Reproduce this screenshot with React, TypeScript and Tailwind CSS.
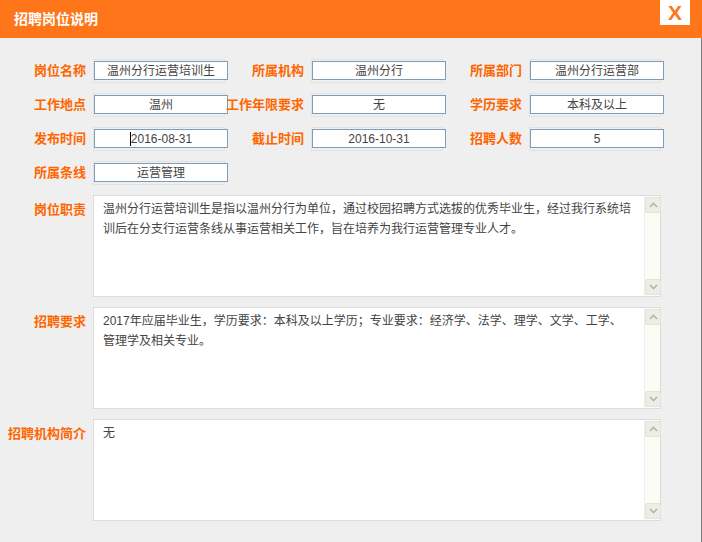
const font = { fontFamily: '"Liberation Sans", "Noto Sans CJK SC", sans-serif' };

type Field = { label: string; value: string; caret?: boolean };

const rows: Field[][] = [
  [
    { label: '岗位名称', value: '温州分行运营培训生' },
    { label: '所属机构', value: '温州分行' },
    { label: '所属部门', value: '温州分行运营部' },
  ],
  [
    { label: '工作地点', value: '温州' },
    { label: '工作年限要求', value: '无' },
    { label: '学历要求', value: '本科及以上' },
  ],
  [
    { label: '发布时间', value: '2016-08-31', caret: true },
    { label: '截止时间', value: '2016-10-31' },
    { label: '招聘人数', value: '5' },
  ],
  [{ label: '所属条线', value: '运营管理' }],
];

const areas = [
  {
    label: '岗位职责',
    lines: [
      '温州分行运营培训生是指以温州分行为单位，通过校园招聘方式选拔的优秀毕业生，经过我行系统培',
      '训后在分支行运营条线从事运营相关工作，旨在培养为我行运营管理专业人才。',
    ],
  },
  {
    label: '招聘要求',
    lines: [
      '2017年应届毕业生，学历要求：本科及以上学历；专业要求：经济学、法学、理学、文学、工学、',
      '管理学及相关专业。',
    ],
  },
  { label: '招聘机构简介', lines: ['无'] },
];

function Label({ text }: { text: string }) {
  return (
    <div className="w-[76px] mr-[7px] flex justify-end whitespace-nowrap text-[13px] font-bold text-[#ff6600]">
      {text}
    </div>
  );
}

function Input({ value, caret }: { value: string; caret?: boolean }) {
  return (
    <div className="w-[132px] h-[24px] border border-[#e2e2e2]">
      <div className="mt-px w-[134px] h-[19px] border border-[#7f9db9] bg-white flex items-center justify-center text-[12px] text-[#444]">
        {caret && <span className="inline-block w-px h-[14px] bg-black" />}
        {value}
      </div>
    </div>
  );
}

function ScrollButton({ up }: { up?: boolean }) {
  return (
    <div className="w-[16px] h-[16px] bg-[#eeede5] border border-[#e4e3da] rounded-[2px] flex items-center justify-center">
      <svg width="9" height="6" viewBox="0 0 9 6">
        <path
          d={up ? 'M1 5 L4.5 1.5 L8 5' : 'M1 1 L4.5 4.5 L8 1'}
          fill="none"
          stroke="#b5b4ab"
          strokeWidth="1.6"
        />
      </svg>
    </div>
  );
}

function Area({ label, lines }: { label: string; lines: string[] }) {
  return (
    <div className="flex items-start">
      <div className="pt-[5px]">
        <Label text={label} />
      </div>
      <div className="w-[568px] h-[102px] border border-[#dcdcdc] bg-white flex">
        <div className="flex-1 pl-[9px] pt-[3px] text-[12px] leading-[20px] text-[#444] whitespace-nowrap">
          {lines.map((l) => (
            <div key={l}>{l}</div>
          ))}
        </div>
        <div className="w-[16px] bg-[#fcfcf6] flex flex-col justify-between py-px border-l border-[#eeeeea]">
          <ScrollButton up />
          <ScrollButton />
        </div>
      </div>
    </div>
  );
}

export default function App() {
  return (
    <div className="w-[702px] h-[542px] overflow-hidden flex flex-col bg-[#efefef]" style={font}>
      <div className="h-[38px] shrink-0 bg-[#ff7519] flex items-start">
        <div className="pl-[14px] pt-[9px] text-[14px] font-bold text-white">招聘岗位说明</div>
        <div className="ml-auto mr-[12px] w-[30px] h-[25px] bg-white flex items-center justify-center text-[21px] font-bold leading-none text-[#ff7519]">
          X
        </div>
      </div>
      <div className="flex-1 border-r border-[#808080] pl-[10px] pt-[21px]">
        <div className="flex flex-col gap-[10px]">
          {rows.map((row, i) => (
            <div key={i} className="flex">
              {row.map((f) => (
                <div key={f.label} className="w-[218px] flex items-center">
                  <Label text={f.label} />
                  <Input value={f.value} caret={f.caret} />
                </div>
              ))}
            </div>
          ))}
        </div>
        <div className="mt-[10px] flex flex-col gap-[10px]">
          {areas.map((a) => (
            <Area key={a.label} label={a.label} lines={a.lines} />
          ))}
        </div>
      </div>
    </div>
  );
}
